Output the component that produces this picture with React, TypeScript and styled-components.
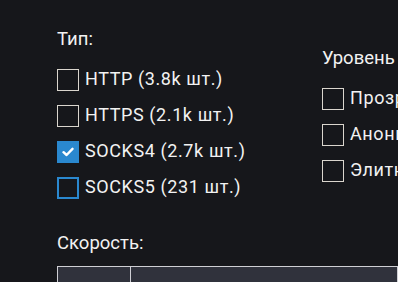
import React from "react";
import styled, { createGlobalStyle } from "styled-components";

const Global = createGlobalStyle`
  html, body { margin: 0; padding: 0; background: #16171b; }
  body { font-family: Roboto, "Noto Sans", sans-serif; color: #f2f2f2; overflow: hidden; }
`;

const Page = styled.div`
  padding: 29px 0 0 57px;
  width: 398px;
  height: 282px;
  box-sizing: border-box;
  overflow: hidden;
`;

const Filters = styled.div`
  display: flex;
`;

const Column = styled.div<{ $offset?: number; $width?: number }>`
  display: flex;
  flex-direction: column;
  margin-top: ${(p) => p.$offset ?? 0}px;
  width: ${(p) => (p.$width ? `${p.$width}px` : "auto")};
  flex-shrink: 0;
`;

const Label = styled.div`
  font-size: 18.5px;
  line-height: 21px;
  margin-bottom: 12px;
  white-space: nowrap;
`;

const Option = styled.label`
  display: flex;
  align-items: center;
  gap: 6px;
  height: 36px;
  font-size: 18px;
  white-space: nowrap;
  letter-spacing: 0.6px;
`;

const OptionText = styled.span`
  margin-top: -3px;
`;

const Box = styled.span<{ $checked?: boolean; $focus?: boolean }>`
  width: 22px;
  height: 22px;
  box-sizing: border-box;
  flex-shrink: 0;
  display: flex;
  align-items: center;
  justify-content: center;
  background: ${(p) => (p.$checked ? "#2a88cf" : "#16171b")};
  border: ${(p) =>
    p.$checked ? "none" : p.$focus ? "2px solid #2a88cf" : "1.5px solid #dad6ce"};
`;

const Speed = styled.div`
  margin-top: 27px;
`;

const Table = styled.div`
  display: grid;
  grid-template-columns: 73px 1fr;
  margin-top: 12px;
  height: 40px;
  border-top: 1.5px solid #cfcfd4;
  border-left: 1.5px solid #cfcfd4;
  background: #30323c;
`;

const Cell = styled.div`
  border-right: 1.5px solid #cfcfd4;
`;

const Check = () => (
  <svg width="12" height="10" viewBox="0 0 12 10">
    <path d="M1.5 5.2 L4.6 8 L10.5 1.8" fill="none" stroke="#fff" strokeWidth="2.4" strokeLinecap="round" strokeLinejoin="round" />
  </svg>
);

const types = [
  { text: "HTTP (3.8k шт.)" },
  { text: "HTTPS (2.1k шт.)" },
  { text: "SOCKS4 (2.7k шт.)", checked: true },
  { text: "SOCKS5 (231 шт.)", focus: true },
];

const levels = ["Прозрачный", "Анонимный", "Элитный"];

export default function App() {
  return (
    <>
      <Global />
      <Page>
        <Filters>
          <Column $width={265}>
            <Label>Тип:</Label>
            {types.map((t) => (
              <Option key={t.text}>
                <Box $checked={t.checked} $focus={t.focus}>{t.checked && <Check />}</Box>
                <OptionText>{t.text}</OptionText>
              </Option>
            ))}
          </Column>
          <Column $offset={19}>
            <Label>Уровень анонимности:</Label>
            {levels.map((l) => (
              <Option key={l}>
                <Box />
                <OptionText>{l}</OptionText>
              </Option>
            ))}
          </Column>
        </Filters>
        <Speed>
          <Label>Скорость:</Label>
          <Table>
            <Cell />
            <Cell />
          </Table>
        </Speed>
      </Page>
    </>
  );
}
